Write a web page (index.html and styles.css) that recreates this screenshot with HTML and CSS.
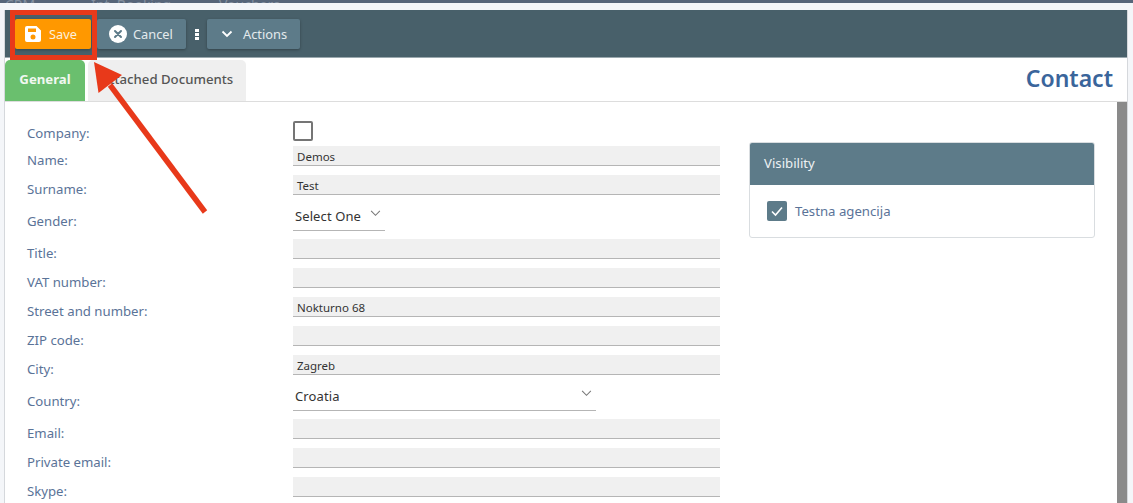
FILE: index.html
```html
<!DOCTYPE html>
<html lang="en">
<head>
<meta charset="utf-8">
<title>Contact</title>
<link rel="stylesheet" href="styles.css">
</head>
<body>
<nav class="topstrip"><span class="nav-a">CRM</span><span class="nav-b">Int. Booking</span><span class="nav-c">Vouchers</span></nav>
<main class="window">
  <div class="toolbar">
    <button class="btn btn-save">
      <svg class="ico" viewBox="0 0 16 16" width="16" height="16"><path fill="#fff" fill-rule="evenodd" d="M2 0h9.500L16 4.500V14a2 2 0 0 1-2 2H2a2 2 0 0 1-2-2V2a2 2 0 0 1 2-2zm1 2.500v3.500h8V2.500zM8 8.500a2.500 2.500 0 1 0 0 5 2.500 2.500 0 0 0 0-5z"/></svg>
      Save
    </button>
    <button class="btn btn-cancel">
      <svg class="ico" viewBox="0 0 18 18" width="18" height="18"><circle cx="9" cy="9" r="9" fill="#fff"/><path d="M6 6l6 6M12 6l-6 6" stroke="#5d7b89" stroke-width="2" stroke-linecap="round"/></svg>
      Cancel
    </button>
    <span class="kebab"><i></i><i></i><i></i></span>
    <button class="btn btn-actions">
      <svg class="ico" viewBox="0 0 12 8" width="12" height="8"><path d="M1.500 1.500L6 6l4.500-4.500" fill="none" stroke="#fff" stroke-width="1.800"/></svg>
      Actions
    </button>
  </div>
  <div class="tabbar">
    <div class="tab tab-active">General</div>
    <div class="tab">Attached Documents</div>
    <h1 class="title">Contact</h1>
  </div>
  <div class="content">
    <form class="form">
      <div class="row row-check"><label>Company:</label><span class="check"></span></div>
      <div class="row"><label>Name:</label><div class="input">Demos</div></div>
      <div class="row"><label>Surname:</label><div class="input">Test</div></div>
      <div class="row row-select"><label>Gender:</label><div class="select select-sm">Select One<svg class="chev" viewBox="0 0 12 8" width="11" height="7"><path d="M1 1l5 5 5-5" fill="none" stroke="#777" stroke-width="1.200"/></svg></div></div>
      <div class="row"><label>Title:</label><div class="input"></div></div>
      <div class="row"><label>VAT number:</label><div class="input"></div></div>
      <div class="row"><label>Street and number:</label><div class="input">Nokturno 68</div></div>
      <div class="row"><label>ZIP code:</label><div class="input"></div></div>
      <div class="row"><label>City:</label><div class="input">Zagreb</div></div>
      <div class="row row-select"><label>Country:</label><div class="select select-lg">Croatia<svg class="chev" viewBox="0 0 12 8" width="11" height="7"><path d="M1 1l5 5 5-5" fill="none" stroke="#777" stroke-width="1.200"/></svg></div></div>
      <div class="row"><label>Email:</label><div class="input"></div></div>
      <div class="row"><label>Private email:</label><div class="input"></div></div>
      <div class="row"><label>Skype:</label><div class="input"></div></div>
    </form>
    <aside class="panel">
      <div class="panel-head">Visibility</div>
      <div class="panel-body">
        <span class="check-on"><svg viewBox="0 0 20 20" width="20" height="20"><path d="M5 10.500l3.500 3.500L15 6.500" fill="none" stroke="#fff" stroke-width="1.600"/></svg></span>
        <span class="panel-label">Testna agencija</span>
      </div>
    </aside>
    <div class="scrollbar"></div>
  </div>
</main>
<div class="highlight"></div>
<svg class="arrow" width="220" height="220" viewBox="0 0 220 220"><path d="M205 212L110 85" fill="none" stroke="#e8391a" stroke-width="5.500"/><path d="M94 62L98.500 93L122 75z" fill="#e8391a"/></svg>
</body>
</html>
```
FILE: styles.css
```css
* { box-sizing: border-box; }
html, body { margin: 0; height: 100%; }
body {
  position: relative;
  height: 503px;
  overflow: hidden;
  background: #f4f6f9;
  font-family: "Noto Sans", "Open Sans", sans-serif;
  font-size: 13.200px;
  color: #333;
}
.topstrip {
  height: 3px;
  background: #566579;
  overflow: hidden;
  display: flex;
  align-items: flex-end;
  font-size: 14px;
  line-height: 14px;
  color: #8490a0;
}
.topstrip span { flex: none; position: relative; top: 9px; }
.nav-a { margin-left: 5px; width: 86px; }
.nav-b { width: 128px; }
.window {
  margin: 7px 5px 0 4px;
  height: 493px;
  background: #fff;
  border-left: 1px solid #d5d8dc;
  border-right: 1px solid #d5d8dc;
  display: flex;
  flex-direction: column;
  overflow: hidden;
}
.toolbar {
  height: 48px;
  flex: none;
  background: #48606a;
  border-bottom: 1px solid #9aa8ae;
  display: flex;
  align-items: flex-start;
  padding: 9px 0 0 10px;
}
.btn {
  height: 30px;
  border: 0;
  border-radius: 2px;
  background: #5d7b89;
  color: #e3eaed;
  font: inherit;
  font-size: 12.800px;
  display: flex;
  align-items: center;
  padding: 0 0 0 12px;
  margin-right: 6px;
  box-shadow: 0 1px 3px rgba(0,0,0,.3);
}
.btn-save { background: #ff9800; width: 76px; padding-left: 10px; gap: 8px; color: #fdf0dc; }
.btn-cancel { width: 89px; gap: 6px; margin-right: 7px; }
.btn-actions { width: 93px; padding-left: 14px; gap: 10px; margin-right: 0; }
.btn .ico { flex: none; }
.kebab { width: 8px; height: 30px; margin-right: 6px; display: flex; flex-direction: column; justify-content: center; align-items: center; gap: 1px; }
.kebab i { width: 4px; height: 3px; background: #fff; }
.tabbar {
  height: 44px;
  flex: none;
  display: flex;
  align-items: stretch;
  padding-top: 2px;
  border-bottom: 1px solid #ddd;
}
.tab {
  width: 158px;
  margin-left: 3px;
  padding-bottom: 4px;
  background: #efefef;
  border-radius: 5px 5px 0 0;
  color: #555;
  display: flex;
  align-items: center;
  justify-content: center;
  font-weight: 500;
}
.tab-active {
  width: 80px;
  margin-left: 0;
  background: #6abf6e;
  color: #f1f8f1;
  font-weight: 700;
  border-radius: 5px 5px 0 0;
}
.title {
  margin: -5px 14px 0 auto;
  align-self: center;
  font-size: 23px;
  font-weight: 600;
  color: #3a659b;
}
.content { flex: 1; min-height: 0; display: flex; align-items: flex-start; }
.form { width: 715px; padding: 19px 0 0 22px; flex: none; }
.row { display: flex; height: 20px; margin-bottom: 9px; }
.row label { width: 266px; flex: none; color: #5a7398; line-height: 20px; position: relative; top: 4px; }
.row-check { height: 20px; margin-bottom: 5px; }
.row-check label { top: 2px; }
.row-select { height: 29px; margin-bottom: 8px; margin-top: -2px; }
.row-select label { top: 9px; }
.input {
  width: 427px;
  background: #f0f0f0;
  border-bottom: 1px solid #b5b5b5;
  padding-left: 4px;
  line-height: 21px;
  font-size: 11.500px;
  color: #333;
}
.check { width: 20px; height: 20px; border: 2px solid #757575; border-radius: 2px; background: #fff; }
.select {
  position: relative;
  height: 29px;
  border-bottom: 1px solid #b5b5b5;
  padding: 4px 0 0 2px;
  line-height: 20px;
  font-size: 13px;
  letter-spacing: .1px;
  color: #333;
}
.select-sm { width: 92px; }
.select-lg { width: 303px; }
.chev { position: absolute; right: 4px; top: 8px; }
.panel {
  width: 346px;
  margin: 40px 0 0 29px;
  flex: none;
  border: 1px solid #d9dde0;
  border-radius: 3px;
  overflow: hidden;
}
.panel-head { height: 43px; background: #5d7b89; color: #eef2f4; line-height: 43px; padding-left: 15px; margin: -1px -1px 0; }
.panel-body { height: 52px; display: flex; align-items: center; padding-left: 17px; gap: 8px; color: #5a7398; }
.check-on { width: 20px; height: 20px; background: #5d7b89; border-radius: 2px; display: block; }
.scrollbar { width: 10px; height: 420px; margin-left: 22px; background: #8a8a8a; flex: none; }
.highlight {
  position: absolute;
  left: 10px;
  top: 10px;
  width: 87px;
  height: 50px;
  border: 5px solid #e8391a;
}
.arrow { position: absolute; left: 0; top: 0; }
```
